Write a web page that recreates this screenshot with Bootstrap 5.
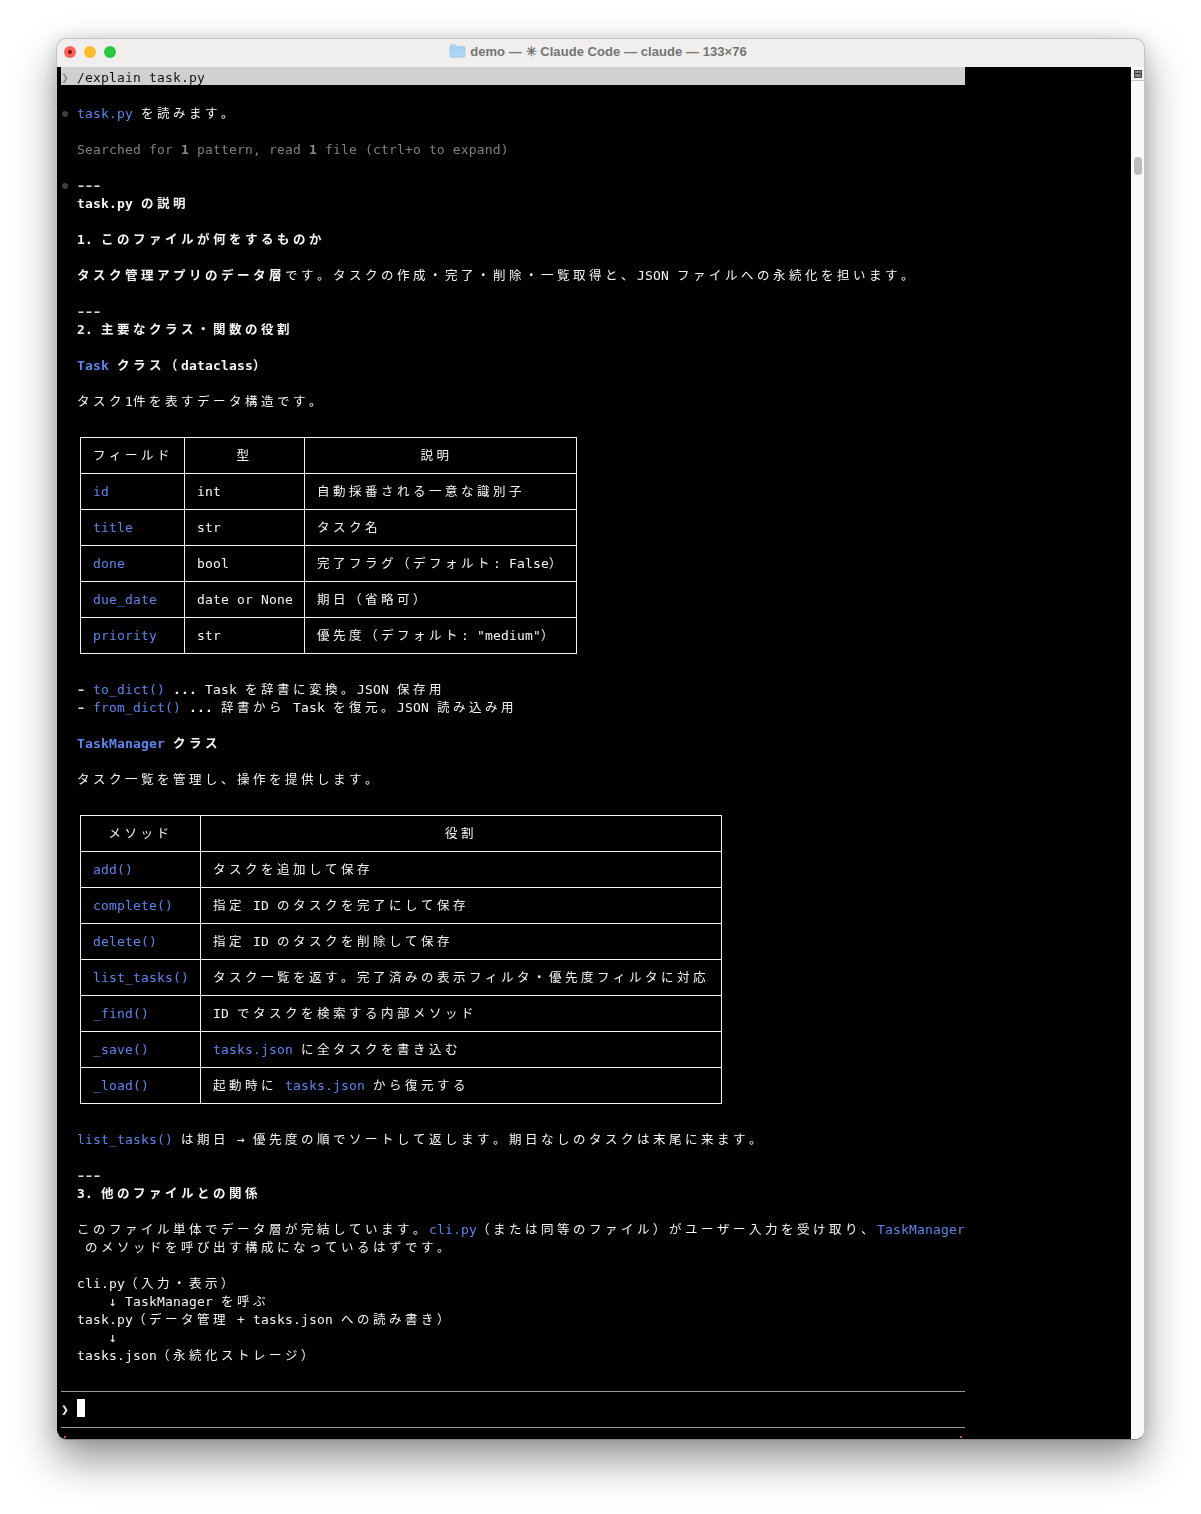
<!doctype html>
<html lang="ja">
<head>
<meta charset="utf-8">
<title>demo — Claude Code</title>
<link href="https://cdn.jsdelivr.net/npm/bootstrap@5.3.0/dist/css/bootstrap.min.css" rel="stylesheet">
<style>
html,body{background:#fff;}
body{padding:38px 56px 74px;height:1514px;overflow:hidden;}
.mac-win{height:1402px;border-radius:10px;overflow:hidden;border:1px solid #c4c4c4;border-bottom-color:#888;background:#f0efed;box-shadow:0 20px 42px rgba(0,0,0,.42),0 0 14px rgba(0,0,0,.12);}
.mac-bar{height:28px;position:relative;padding-bottom:2px;}
.dot-l{width:12px;height:12px;border-radius:50%;}
.dot-r{background:#ff5f57;position:relative;}
.dot-r::after{content:"";position:absolute;left:4px;top:4px;width:4px;height:4px;border-radius:50%;background:#6b0f0a;}
.dot-y{background:#febc2e;}
.dot-g{background:#28c840;}
.lights{padding-left:7px;gap:8px;}
.mac-title{font:700 13px/1 "Liberation Sans",sans-serif;letter-spacing:.06px;color:#747474;gap:4px;left:0;right:0;top:0;bottom:2px;position:absolute;padding-right:5px;padding-bottom:2px;}
.term{background:#000;width:1074px;padding-left:4px;position:relative;}
.scr{width:14px;background:#f9f9f9;position:relative;}
.scr-btn{height:14px;border-bottom:1px solid #c8c8c8;}
.scr-ico{width:8px;height:8px;border:1px solid #444;background:#888;position:relative;}
.scr-ico::after{content:"";position:absolute;left:0;right:0;top:2px;height:1px;background:#333;}
.scr-thumb{position:absolute;left:3px;top:90px;width:8px;height:18px;border-radius:4px;background:#bdbdbd;}
.tx{width:904px;color:#f6f6f6;font:13px/18px "DejaVu Sans Mono","Noto Sans CJK JP",monospace;letter-spacing:.17px;filter:blur(.25px);}
.ln{height:18px;line-height:22px;padding-left:16px;position:relative;white-space:pre;}
.wd{font-family:"Noto Sans CJK JP","DejaVu Sans",sans-serif;letter-spacing:3.5px;font-size:12.5px;line-height:1;font-kerning:none;}
.lk{color:#5d86ee;}
.bd{font-weight:700;}
.gy{color:#808080;}
.gy .bd{color:#8c8c8c;}
.sel{background:#d0d0d0;color:#111;}
.gut{position:absolute;left:0;top:0;width:16px;color:#555;}
.sel .gut{color:#8c8c8c;}
.bul{position:absolute;left:1px;top:8px;width:6px;height:6px;border-radius:50%;background:#3c3c3c;}
.dash{font-size:20px;letter-spacing:-4.04px;line-height:0;position:relative;top:2px;left:-2px;color:#d8d8d8;}
.tbl-box{height:234px;padding:10px 0 0 19px;}
.tbl-box2{height:306px;padding:10px 0 0 19px;}
.tbl-box table,.tbl-box2 table{table-layout:fixed;margin:0;--bs-table-bg:#000;--bs-table-color:#f6f6f6;--bs-table-border-color:#f4f4f4;border-color:#f4f4f4;}
.tbl-box table{width:496px;}
.tbl-box2 table{width:641px;}
.tbl-box td,.tbl-box th,.tbl-box2 td,.tbl-box2 th{height:36px;padding:0 12px;vertical-align:middle;border:1px solid #f4f4f4;font-weight:400;line-height:18px;white-space:pre;overflow:visible;}
.tbl-box th.hd-shift{padding-right:20px;}
.tbl-box table td.lk,.tbl-box2 table td.lk,.tbl-box2 table td .lk{color:#5d86ee;--bs-table-color:#5d86ee;}
.c1{width:104px}.c2{width:120px}.c3{width:272px}.m1{width:120px}.m2{width:521px}
.rule{height:18px;position:relative;}
.rule::after{content:"";position:absolute;left:0;width:904px;top:10px;height:1px;background:#9a9a9a;}
.chev{position:absolute;left:0;top:0;font-weight:700;color:#f2f2f2;}
.cur{display:inline-block;width:8px;height:18px;background:#fff;vertical-align:top;}
.spk{position:absolute;top:1px;width:2px;height:2px;background:#c8541c;}
.sp1{left:3px}.sp2{left:899px}
</style>
</head>
<body>
<div class="mac-win d-flex flex-column">
  <div class="mac-bar d-flex align-items-center lights flex-shrink-0">
    <span class="dot-l dot-r"></span><span class="dot-l dot-y"></span><span class="dot-l dot-g"></span>
    <div class="mac-title d-flex align-items-center justify-content-center">
      <svg width="17" height="14" viewBox="0 0 17 14"><path d="M1 2.2C1 1.3 1.6.8 2.4.8h4l1.4 1.6h6.8c.9 0 1.4.6 1.4 1.4v8.2c0 .8-.5 1.2-1.4 1.2H2.4c-.8 0-1.4-.4-1.4-1.2z" fill="#a9d6f2" stroke="#8ec2e2" stroke-width=".6"/><path d="M1 4h15" stroke="#8ec2e2" stroke-width=".6"/></svg>
      <span>demo — ✳ Claude Code — claude — 133×76</span>
    </div>
  </div>
  <div class="d-flex flex-grow-1">
    <div class="term flex-shrink-0">
      <div class="tx" id="tx">
<div class="ln sel"><span class="gut">❯</span>/explain task.py</div>
<div class="ln"></div>
<div class="ln"><span class="bul"></span><span class="lk">task.py</span> を読みます。</div>
<div class="ln"></div>
<div class="ln gy">Searched for <span class="bd">1</span> pattern, read <span class="bd">1</span> file (ctrl+o to expand)</div>
<div class="ln"></div>
<div class="ln"><span class="bul"></span><span class="dash">---</span></div>
<div class="ln bd">task.py の説明</div>
<div class="ln"></div>
<div class="ln bd">1. このファイルが何をするものか</div>
<div class="ln"></div>
<div class="ln"><span class="bd">タスク管理アプリのデータ層</span>です。タスクの作成・完了・削除・一覧取得と、JSON ファイルへの永続化を担います。</div>
<div class="ln"></div>
<div class="ln"><span class="dash">---</span></div>
<div class="ln bd">2. 主要なクラス・関数の役割</div>
<div class="ln"></div>
<div class="ln bd"><span class="lk">Task</span> クラス（dataclass）</div>
<div class="ln"></div>
<div class="ln">タスク1件を表すデータ構造です。</div>
<div class="ln"></div>
<div class="tbl-box">
<table class="table table-bordered">
<colgroup><col class="c1"><col class="c2"><col class="c3"></colgroup>
<thead><tr><th class="text-center">フィールド</th><th class="text-center">型</th><th class="text-center hd-shift">説明</th></tr></thead>
<tbody>
<tr><td class="lk">id</td><td>int</td><td>自動採番される一意な識別子</td></tr>
<tr><td class="lk">title</td><td>str</td><td>タスク名</td></tr>
<tr><td class="lk">done</td><td>bool</td><td>完了フラグ（デフォルト: False）</td></tr>
<tr><td class="lk">due_date</td><td>date or None</td><td>期日（省略可）</td></tr>
<tr><td class="lk">priority</td><td>str</td><td>優先度（デフォルト: "medium"）</td></tr>
</tbody>
</table>
</div>
<div class="ln"></div>
<div class="ln"><span class="dash">-</span> <span class="lk">to_dict()</span> <span class="bd">...</span> Task を辞書に変換。JSON 保存用</div>
<div class="ln"><span class="dash">-</span> <span class="lk">from_dict()</span> <span class="bd">...</span> 辞書から Task を復元。JSON 読み込み用</div>
<div class="ln"></div>
<div class="ln bd"><span class="lk">TaskManager</span> クラス</div>
<div class="ln"></div>
<div class="ln">タスク一覧を管理し、操作を提供します。</div>
<div class="ln"></div>
<div class="tbl-box2">
<table class="table table-bordered">
<colgroup><col class="m1"><col class="m2"></colgroup>
<thead><tr><th class="text-center">メソッド</th><th class="text-center">役割</th></tr></thead>
<tbody>
<tr><td class="lk">add()</td><td>タスクを追加して保存</td></tr>
<tr><td class="lk">complete()</td><td>指定 ID のタスクを完了にして保存</td></tr>
<tr><td class="lk">delete()</td><td>指定 ID のタスクを削除して保存</td></tr>
<tr><td class="lk">list_tasks()</td><td>タスク一覧を返す。完了済みの表示フィルタ・優先度フィルタに対応</td></tr>
<tr><td class="lk">_find()</td><td>ID でタスクを検索する内部メソッド</td></tr>
<tr><td class="lk">_save()</td><td><span class="lk">tasks.json</span> に全タスクを書き込む</td></tr>
<tr><td class="lk">_load()</td><td>起動時に <span class="lk">tasks.json</span> から復元する</td></tr>
</tbody>
</table>
</div>
<div class="ln"></div>
<div class="ln"><span class="lk">list_tasks()</span> は期日 → 優先度の順でソートして返します。期日なしのタスクは末尾に来ます。</div>
<div class="ln"></div>
<div class="ln"><span class="dash">---</span></div>
<div class="ln bd">3. 他のファイルとの関係</div>
<div class="ln"></div>
<div class="ln">このファイル単体でデータ層が完結しています。<span class="lk">cli.py</span>（または同等のファイル）がユーザー入力を受け取り、<span class="lk">TaskManager</span></div>
<div class="ln"> のメソッドを呼び出す構成になっているはずです。</div>
<div class="ln"></div>
<div class="ln">cli.py（入力・表示）</div>
<div class="ln">    ↓ TaskManager を呼ぶ</div>
<div class="ln">task.py（データ管理 + tasks.json への読み書き）</div>
<div class="ln">    ↓</div>
<div class="ln">tasks.json（永続化ストレージ）</div>
<div class="ln"></div>
<div class="rule"></div>
<div class="ln"><span class="chev">❯</span><span class="cur"></span></div>
<div class="rule"></div>
<div class="ln"><span class="spk sp1"></span><span class="spk sp2"></span></div>
      </div>
    </div>
    <div class="scr flex-grow-1">
      <div class="scr-btn d-flex align-items-center justify-content-center"><span class="scr-ico"></span></div>
      <div class="scr-thumb"></div>
    </div>
  </div>
</div>
<script src="https://cdn.jsdelivr.net/npm/bootstrap@5.3.0/dist/js/bootstrap.bundle.min.js"></script>
<script>
(function(){
  var re=/[\u3000-\u30ff\u3400-\u9fff\uff00-\uffef]+/g;
  var root=document.getElementById('tx');
  var walker=document.createTreeWalker(root,NodeFilter.SHOW_TEXT);
  var nodes=[],n;
  while(n=walker.nextNode()){if(/[\u3000-\u30ff\u3400-\u9fff\uff00-\uffef]/.test(n.nodeValue))nodes.push(n);}
  nodes.forEach(function(t){
    var f=document.createDocumentFragment(),s=t.nodeValue,last=0,m;
    re.lastIndex=0;
    while(m=re.exec(s)){
      if(m.index>last)f.appendChild(document.createTextNode(s.slice(last,m.index)));
      var e=document.createElement('span');e.className='wd';e.textContent=m[0];f.appendChild(e);
      last=m.index+m[0].length;
    }
    if(last<s.length)f.appendChild(document.createTextNode(s.slice(last)));
    t.parentNode.replaceChild(f,t);
  });
})();
</script>
</body>
</html>
